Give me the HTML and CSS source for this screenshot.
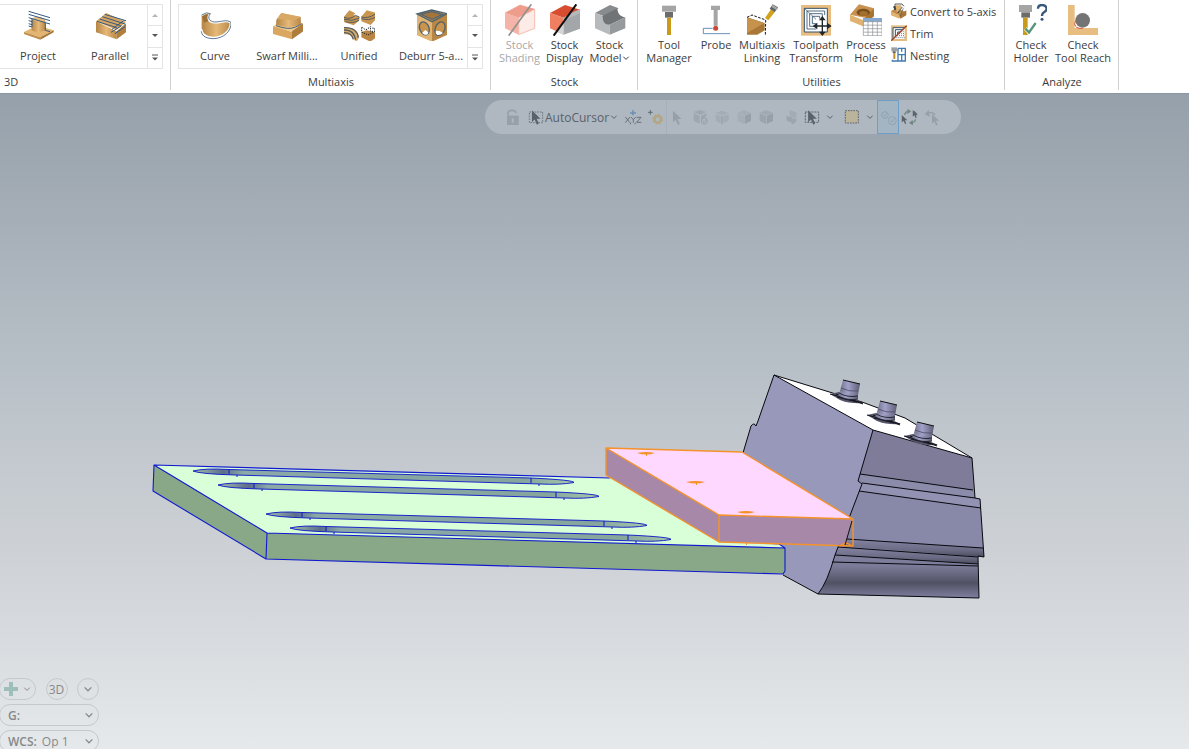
FILE: index.html
```html
<!DOCTYPE html>
<html lang="en">
<head>
<meta charset="utf-8">
<title>Toolpaths</title>
<link rel="stylesheet" href="styles.css">
</head>
<body>
<svg class="defs" width="0" height="0" aria-hidden="true">
  <defs>
    <linearGradient id="tan" x1="0" y1="0" x2="1" y2="1"><stop offset="0" stop-color="#b98747"/><stop offset="1" stop-color="#e9bf7d"/></linearGradient>
    <linearGradient id="tanV" x1="0" y1="0" x2="1" y2="0"><stop offset="0" stop-color="#b58544"/><stop offset=".5" stop-color="#e6b978"/><stop offset="1" stop-color="#b98848"/></linearGradient>
    <symbol id="chev" viewBox="0 0 8 8"><path d="M1.300 2.700 4 5.400 6.700 2.700" fill="none" stroke="currentColor" stroke-width="1"/></symbol>
    <symbol id="pointer" viewBox="0 0 26 42"><path d="M0 0V34L8 26 15 41 20 38 14 24H25Z" fill="currentColor"/></symbol>
  </defs>
</svg>

<header class="ribbon">
  <section class="group group-3d">
    <div class="gallery gallery-open">
      <button class="tile"><svg viewBox="66 27 96 96"><path d="M72 96 112 76 161 91 121 112Z" fill="#e3b573"/><path d="M72 96V102L121 119V112Z" fill="#c08d4b"/><path d="M121 112 161 91V97L121 119Z" fill="#a87636"/><path d="M95 57V91Q114 101 136 91V62Q116 68 95 57Z" fill="url(#tanV)"/><path d="M95 57Q103 48 121 51 137 57 136 64 112 69 95 57Z" fill="#e8bd7c"/><path d="M86 34 150 53M86 43 150 62M86 53 96 56V81L86 78M86 62 96 65M86 71 96 74M96 56 136 68V91L150 95M136 68 150 72" fill="none" stroke="#345a83" stroke-width="3"/></svg><span>Project</span></button>
      <button class="tile"><svg viewBox="282 27 96 96"><path d="M288 64 319 39 378 66 350 90Z" fill="#d9a661"/><path d="M288 64 350 94V118L288 97Z" fill="url(#tanV)"/><path d="M350 94 378 70V97L350 118Z" fill="#b17e3c"/><path d="M314 43 381 63M307 50 375 72M299 57 362 77M291 64 350 83M371 62 336 88M365 77 333 97M375 80 345 101" stroke="#345a83" stroke-width="3" fill="none"/></svg><span>Parallel</span></button>
      <div class="spin"><button aria-label="Scroll up" disabled><svg viewBox="0 0 8 8"><path d="M1 6 4 3 7 6Z" fill="#b4b4b4"/></svg></button><button aria-label="Scroll down"><svg viewBox="0 0 8 8"><path d="M1 2 4 5 7 2Z" fill="#555"/></svg></button><button aria-label="More"><svg viewBox="0 0 8 8"><path d="M1 1h6" stroke="#555"/><path d="M1 3.500 4 6.500 7 3.500Z" fill="#555"/></svg></button></div>
    </div>
    <h2>3D</h2>
  </section>

  <section class="group group-multi">
    <div class="gallery">
      <button class="tile"><svg viewBox="594 27 96 96"><path d="M602 45Q620 33 627 42C617 53 620 67 640 69 660 70 674 60 689 68 694 84 674 110 637 112 612 110 602 101 602 88Z" fill="url(#tanV)"/><path d="M603 46 609 68 623 63 620 42Z" fill="#9c6f35"/><path d="M603 46Q617 35 627 41C617 53 622 67 640 68 662 69 675 58 688 68 690 91 667 112 636 113 609 111 602 101 602 88" fill="none" stroke="#fff" stroke-width="5"/><path d="M602 45Q618 34 628 41C618 54 625 64 640 66 661 66 676 57 690 67 692 92 669 116 636 116 609 115 602 104 601 94" fill="none" stroke="#3d5f80" stroke-width="2.500"/></svg><span>Curve</span></button>
      <button class="tile"><svg viewBox="90 27 96 96"><path d="M96 78 110 72 187 70 153 96Z" fill="#edc98e"/><path d="M96 78 153 96V118L96 102Z" fill="#d9a75f"/><path d="M153 94 187 69V94L153 118Z" fill="#ae7d3e"/><path d="M106 60 121 39 179 51 180 70Q164 84 131 80L105 75Z" fill="url(#tanV)"/><path d="M121 39 180 51 160 61 108 57Z" fill="#d8a864"/><path d="M105 77Q143 91 164 81L182 71" fill="none" stroke="#496079" stroke-width="3"/></svg><span>Swarf Milli...</span></button>
      <button class="tile"><svg viewBox="306 27 96 96"><path d="M309 50 325 31 343 40 337 46 356 51 355 61 338 76 309 66Z" fill="#c99650"/><path d="M309 52Q329 60 343 46L355 51M309 58Q333 65 354 55M313 65Q338 71 354 61" fill="none" stroke="#555c5e" stroke-width="3"/><path d="M361 50 377 31 404 38 403 60 389 75 361 64Z" fill="#c99650"/><path d="M361 51Q380 57 404 42M361 56Q384 63 404 51" fill="none" stroke="#555c5e" stroke-width="3"/><path d="M309 82Q347 79 354 112L347 126 336 115Q331 102 309 103Z" fill="#d8ab6b"/><path d="M309 83Q349 82 352 113M309 90Q338 88 344 119M309 98Q331 97 337 118" fill="none" stroke="#555c5e" stroke-width="4"/><path d="M361 96 378 91 404 98V113L388 125 361 112Z" fill="#bb8643"/><path d="M362 82V96L381 105 403 94M364 82 374 90 389 80 388 94H401V85L393 84" fill="none" stroke="#20272a" stroke-width="3" stroke-dasharray="4 3"/></svg><span>Unified</span></button>
      <button class="tile"><svg viewBox="522 27 96 96"><path d="M528 42 572 30 618 41 573 65Z" fill="#c99651"/><path d="M528 42 573 63V125L528 106Z" fill="#e0b474"/><path d="M573 63 618 42V105L573 125Z" fill="#b98644"/><path d="M545 44 573 35 602 43 573 57Z" fill="#a77437" stroke="#e9c68d"/><path d="M528 42 572 30 618 41 573 65ZM541 43 573 35 604 43 573 58Z" fill="none" stroke="#50626d" stroke-width="4"/><ellipse cx="550" cy="85" rx="14" ry="20" transform="rotate(-22 550 85)" fill="#c8944e" stroke="#53636a" stroke-width="4"/><ellipse cx="597" cy="86" rx="14" ry="21" transform="rotate(22 597 86)" fill="#c8944e" stroke="#53636a" stroke-width="4"/><path d="M543 99 553 90 562 97 559 104 551 104ZM585 92 596 93 606 99Q600 106 589 105L584 100Z" fill="#fff"/></svg><span>Deburr 5-a...</span></button>
      <div class="spin"><button aria-label="Scroll up" disabled><svg viewBox="0 0 8 8"><path d="M1 6 4 3 7 6Z" fill="#b4b4b4"/></svg></button><button aria-label="Scroll down"><svg viewBox="0 0 8 8"><path d="M1 2 4 5 7 2Z" fill="#555"/></svg></button><button aria-label="More"><svg viewBox="0 0 8 8"><path d="M1 1h6" stroke="#555"/><path d="M1 3.500 4 6.500 7 3.500Z" fill="#555"/></svg></button></div>
    </div>
    <h2>Multiaxis</h2>
  </section>

  <section class="group group-stock">
    <div class="tools">
      <button class="tool w-45" disabled><svg viewBox="42 12 96 96"><path d="M45 39 90 15 134 27 85 53Z" fill="#ee9c8b"/><path d="M45 39 86 52V104L45 85Z" fill="#f4b5a8"/><path d="M86 53 134 29V86L86 104Z" fill="#fdebe7"/><path d="M45 39 90 15 134 28V85L86 104V53L134 28M69 77 86 83" fill="none" stroke="#f0a494" stroke-width="2"/><path d="M124 13 56 107" stroke="#8f8f8f" stroke-width="5"/></svg><span>Stock<br>Shading</span></button>
      <button class="tool w-45"><svg viewBox="177 12 96 96"><path d="M180 39 225 15 270 29 221 53Z" fill="#d84d30"/><path d="M180 39 221 53V104L180 85Z" fill="#f07e61"/><path d="M221 52 270 29V86L221 104Z" fill="#a3a7a9"/><path d="M221 68V104L199 95Z" fill="#d3d5d6"/><path d="M240 40 270 28V40L221 62Z" fill="#b5b8b9"/><path d="M259 13 191 107" stroke="#111" stroke-width="6"/></svg><span>Stock<br>Display</span></button>
      <button class="tool w-45"><svg viewBox="309 12 96 96"><path d="M312 39 357 15 383 25 336 47Z" fill="#898c8e"/><path d="M312 39 334 47C334 64 342 73 356 73L356 104 312 85Z" fill="#b7babc"/><path d="M334 47 379 25C380 41 387 50 403 52L356 74C341 74 334 64 334 47Z" fill="#707477"/><path d="M356 74 403 52V85L356 104Z" fill="#969a9d"/></svg><span>Stock<br>Model<svg class="chev"><use href="#chev"/></svg></span></button>
    </div>
    <h2>Stock</h2>
  </section>

  <section class="group group-util">
    <div class="tools">
      <button class="tool w-50"><svg viewBox="489 12 96 96"><path d="M516 17H558V35H516Z" fill="#a5a5a5"/><path d="M525 36H549V53H525Z" fill="#6c6c6c"/><path d="M531 53H543V105H531Z" fill="#c99b18"/></svg><span>Tool<br>Manager</span></button>
      <button class="tool w-44"><svg viewBox="30 12 96 96"><path d="M63 17H90V30H83V77H71V30H63Z" fill="#a5a5a5"/><path d="M40 101V85H68M40 101H120" fill="none" stroke="#4b79a9" stroke-width="2.500"/><circle cx="77" cy="85" r="7.500" fill="#cc4a35"/></svg><span>Probe</span></button>
      <button class="tool w-48"><svg viewBox="168 12 96 96"><path d="M171 52 224 69V91L202 104H171Z" fill="#a97838"/><path d="M171 52 222 70 171 99Z" fill="#c7924c"/><path d="M171 52 186 45 227 60 226 106" fill="none" stroke="#171717" stroke-width="3" stroke-dasharray="8 4"/><path d="M225 54 243 28 254 37 235 61Z" fill="#d3a21c"/><path d="M239 26 248 13 264 22 254 37Z" fill="#606466"/><path d="M246 17 262 28" stroke="#a6a9ab" stroke-width="7"/></svg><span>Multiaxis<br>Linking</span></button>
      <button class="tool w-60"><svg viewBox="330 12 96 96"><path d="M333 15H423V107H333Z" fill="#e7bd82"/><path d="M343 25H412V96H343Z" fill="#fff" stroke="#31516e" stroke-width="3"/><path d="M343 25 378 58" stroke="#31516e" stroke-width="2"/><path d="M404 45V33H351V87H379M397 53V41H359V79H379M389 56V49H367V71H379" fill="none" stroke="#31516e" stroke-width="2.500"/><path d="M397 55V102M373 78H421" stroke="#20272b" stroke-width="4"/><path d="M397 48 387 61H407ZM397 108 387 95H407ZM368 78 382 68V88ZM425 78 411 68V88Z" fill="#20272b"/></svg><span>Toolpath<br>Transform</span></button>
      <button class="tool w-40"><svg viewBox="480 12 96 96"><path d="M480 44 507 13 552 25 531 55Z" fill="#c89150"/><path d="M480 44 519 60V79L480 63Z" fill="#e0b372"/><path d="M519 60 552 25V49L519 79Z" fill="#a97431"/><ellipse cx="520" cy="37" rx="20" ry="11" fill="#78501e"/><path d="M508 37Q521 29 534 38L532 47H511Z" fill="#a56f2d"/><path d="M520 55H576V107H520Z" fill="#fff"/><path d="M519 54H577V65H519Z" fill="#85a9d1"/><path d="M520 65H576V107H520ZM520 75.500H576M520 86H576M520 96.500H576M534 65V107M548 65V107M562 65V107" fill="none" stroke="#898c8e" stroke-width="2"/></svg><span>Process<br>Hole</span></button>
      <div class="small-tools">
        <button><svg viewBox="93 12 48 48"><path d="M93 36 110 27 139 40 124 58 95 48Z" fill="#c18b46"/><path d="M93 37 118 48V59L93 49Z" fill="#dfb270"/><path d="M118 48 139 34V49L121 59Z" fill="#a87536"/><path d="M105 29V15H126L132 22" fill="none" stroke="#555b5d" stroke-width="3"/><path d="M101 23 105 33 110 22ZM114 42 126 25" fill="#394349" stroke="#394349" stroke-width="3"/><path d="M106 19H124L126 29 111 41Z" fill="#ddb16f"/><path d="M111 43 126 25M121 50 130 28" stroke="#475057" stroke-width="2"/></svg>Convert to 5-axis</button>
        <button><svg viewBox="93 78 48 48"><path d="M93 79H141V126H93Z" fill="#e4bb81"/><path d="M99 85H134V120H99Z" fill="#fff"/><path d="M99 119V86H135M106 113V92H128M113 105V99H121" fill="none" stroke="#31516e" stroke-width="3"/><path d="M107 116H134M111 110H134M117 104H134M122 98H134M128 92H134" stroke="#677a8b" stroke-width="3" stroke-dasharray="3 3"/><path d="M94 125 140 80" stroke="#9b3e29" stroke-width="4"/></svg>Trim</button>
        <button><svg viewBox="93 144 48 48"><path d="M94 145H111V157H94Z" fill="#9ba0a2"/><path d="M98 157H107V162H98Z" fill="#595e60"/><path d="M100 162H106V180H100Z" fill="#bd912b"/><path d="M114 148H136V186H97V182M114 148V186M114 167H136M125 167V186M125 148V158" fill="none" stroke="#417aaf" stroke-width="4"/></svg>Nesting</button>
      </div>
    </div>
    <h2>Utilities</h2>
  </section>

  <section class="group group-analyze">
    <div class="tools">
      <button class="tool w-40"><svg viewBox="465 12 96 96"><path d="M477 15H516V36H477Z" fill="#a5a5a5"/><path d="M484 37H510V53H484Z" fill="#6c6c6c"/><path d="M489 53H503V105H489Z" fill="#c99b18"/><path d="M496 86 507 97 527 69" fill="none" stroke="#fff" stroke-width="11"/><path d="M496 86 507 97 527 69" fill="none" stroke="#559478" stroke-width="7"/><path d="M534 26Q534 15 546 15C561 15 564 30 553 36 546 40 546 42 546 48" fill="none" stroke="#37597c" stroke-width="7"/><circle cx="546" cy="58" r="4.500" fill="#37597c"/></svg><span>Check<br>Holder</span></button>
      <button class="tool w-64"><svg viewBox="621 12 96 96"><path d="M624 15H644V84H714V105H624Z" fill="#e7bd82"/><circle cx="668" cy="61" r="22" fill="#747474"/><path d="M648 61C639 74 646 87 668 85" fill="none" stroke="#d75035" stroke-width="3"/></svg><span>Check<br>Tool Reach</span></button>
    </div>
    <h2>Analyze</h2>
  </section>
</header>

<main class="view">
  <svg class="scene" viewBox="0 94 1189 655" role="img" aria-label="Vise holding a slotted plate and a block">
    <defs>
      <linearGradient id="roll" x1="0" y1="0" x2="0" y2="1"><stop offset="0" stop-color="#8585a5"/><stop offset=".65" stop-color="#696982"/><stop offset="1" stop-color="#4c4c5e"/></linearGradient>
      <linearGradient id="jaw" x1="0" y1="0" x2="0" y2="1"><stop offset="0" stop-color="#7f7f9d"/><stop offset=".25" stop-color="#7c7c9a"/><stop offset=".65" stop-color="#515164"/><stop offset="1" stop-color="#8080a0"/></linearGradient>
      <linearGradient id="pin"><stop offset="0" stop-color="#70708a"/><stop offset=".4" stop-color="#a2a2ca"/><stop offset="1" stop-color="#5e5e76"/></linearGradient>
      <linearGradient id="slotFill"><stop offset="0" stop-color="#a4c4a8"/><stop offset=".08" stop-color="#5b6c8c"/><stop offset=".13" stop-color="#8aa9a8"/><stop offset=".87" stop-color="#85a59d"/><stop offset="1" stop-color="#a5c9aa"/></linearGradient>
      <g id="slot"><path d="M193 471Q205 468 229 469.500L531 478Q574 480 574 482.500 560 485 540 484L235 475Q200 474 193 471Z" fill="url(#slotFill)" stroke="#0a12c8" stroke-width=".9"/><path d="M229 470V474M531 478V483M237 475V477M539 484V486" stroke="#0a12c8"/></g>
      <g id="bolt"><path d="M830 394 839 392 864 403Q850 404 840 400Z" fill="#55556a"/><path d="M830 394 863 403M836 394 863 404M837 397 857 402" stroke="#14141c" fill="none"/><path d="M840 391 858 395 858 399Q848 401 838 396Z" fill="url(#pin)"/><path d="M839 393Q848 398 858 396M838 396Q848 401 858 399" fill="none" stroke="#20202a" stroke-width=".9"/><path d="M843 380 860 384 858 395Q848 395 840 391Z" fill="url(#pin)"/><path d="M843 380 860 384" stroke="#111"/><path d="M841 388Q849 392 858 391" fill="none" stroke="#44445a" stroke-width=".7"/></g>
    </defs>
    <g stroke-linejoin="round">
      <path d="M873 430 972 458 975 498 980 499 984 557 978 556 979 598 818 594 835 547Z" fill="#8888a8"/>
      <path d="M873 430 972 458 973 490 860 474Z" fill="#7e7c99"/>
      <path d="M860 474 973 490 975 498 862 483Z" fill="#8b8baa"/>
      <path d="M862 483 980 499 981 508 859 491Z" fill="#9292b3"/>
      <path d="M847 539 983 548 984 557 838 546Z" fill="url(#roll)"/>
      <path d="M838 547 978 557V564L835 555Z" fill="url(#roll)"/>
      <path d="M835 555 978 565 979 598 818 594Z" fill="url(#jaw)"/>
      <path d="M774 375 873 430 858 481 862 484 835 555Q827 583 818 594L783 575 743 453 751 426Q754 422 756 426L758 421Z" fill="#9898bb"/>
      <path d="M774 375 862 402 905 418 972 458 873 430Z" fill="#fff"/>
      <path d="M743 453 751 426Q754 422 756 426L758 421 774 375 873 430 858 481 862 484 835 555Q827 583 818 594L783 575M774 375 862 402 905 418 972 458 873 430M972 458 975 498 980 499 984 557 978 556 979 598 818 594M860 474 973 490M862 483 975 498M859 491 981 508M847 539 983 548M838 547 978 557M835 555 978 564M832 562 978 566" fill="none" stroke="#08080e" stroke-width="1"/>
      <use href="#bolt"/><use href="#bolt" x="37" y="21"/><use href="#bolt" x="74" y="42"/>
      <path d="M154 465 610 478 719 542 781 545 785 548 267 533Z" fill="#d8ffd8"/>
      <path d="M154 465 267 533 266 559 153 491Z" fill="#88a888"/>
      <path d="M267 533 785 548V574L266 559Z" fill="#88a888"/>
      <path d="M610 478 154 465 153 491 266 559 783 574 785 571V548L267 533 154 465M267 533 266 559M779 544 785 548" fill="none" stroke="#1018d0" stroke-width="1.100"/>
      <use href="#slot"/><use href="#slot" x="25" y="14"/><use href="#slot" x="73" y="43"/><use href="#slot" x="97" y="57"/>
      <path d="M606 448 742 452 853 519 719 515Z" fill="#ffd8ff"/>
      <path d="M606 448 719 515V542L606 475Z" fill="#a888a8"/>
      <path d="M719 515 852 519 845 545 719 542Z" fill="#a888a8"/>
      <path d="M606 448 742 452 853 519V546L719 542 606 475V448L719 515 853 519M719 515V542M841 545 847 543 852 546" fill="none" stroke="#f5922a" stroke-width="1.400"/>
      <path d="M852 521 845 545" stroke="#111"/>
      <g fill="#f5922a"><path d="M637 453Q646 451 655 453 646 456 637 453ZM686 482Q696 480 705 482 696 485 686 482ZM737 512Q746 510 755 512 746 515 737 512Z"/><path d="M646 454h1v2h-1ZM696 483h1v2h-1ZM746 543h1v2h-1Z"/></g>
    </g>
  </svg>

  <div class="selectbar" role="toolbar" aria-label="Selection">
    <button class="dim" aria-label="Lock"><svg viewBox="63 33 66 66"><path d="M84 62V54Q84 46 96 46 107 46 108 54" fill="none" stroke="currentColor" stroke-width="5"/><path d="M81 62H116V90H81Z" fill="currentColor"/><path d="M98 70V83" stroke="#afb7c0" stroke-width="6"/></svg></button>
    <button class="auto"><svg viewBox="135 33 66 66"><path d="M148 51H188V83H148Z" fill="none" stroke="#646b74" stroke-width="2.500" stroke-dasharray="5 3"/><use href="#pointer" x="155" y="46" width="28" height="44"/></svg><span>AutoCursor</span><svg class="chev"><use href="#chev"/></svg></button>
    <button aria-label="XYZ"><svg viewBox="426 33 66 66"><path d="M459 46V61M450 54H468" stroke="#6e91b5" stroke-width="5"/><path d="M436 66 450 83M450 66 436 83M453 66 460 74 467 66M460 74V83M470 67H483L470 82H484M453 83 450 88M467 83 464 88" fill="none" stroke="#59616b" stroke-width="2.500"/></svg></button>
    <button aria-label="Point options"><svg viewBox="492 33 66 66"><path d="M511 45V59M504 52H518" stroke="#626a73" stroke-width="3"/><circle cx="533" cy="73" r="10" fill="none" stroke="#b3a681" stroke-width="7"/><circle cx="533" cy="73" r="14" fill="none" stroke="#b3a681" stroke-width="4" stroke-dasharray="5.500 5.500"/></svg></button>
    <i class="rule"></i>
    <button class="dim" aria-label="Pointer"><svg viewBox="561 33 66 66"><use href="#pointer" x="578" y="47" width="28" height="44"/></svg></button>
    <button class="dim" aria-label="Solid select"><svg viewBox="627 33 66 66"><path d="M641 51 660 45 678 51 660 59ZM641 55 659 63V86L641 77ZM663 62 679 55V64L663 75Z" fill="currentColor" opacity=".7"/><circle cx="673" cy="78" r="9" fill="none" stroke="currentColor" stroke-width="3"/><path d="M668 77 673 82 680 72" fill="none" stroke="currentColor" stroke-width="3"/></svg></button>
    <button class="dim" aria-label="Edge select"><svg viewBox="693 33 66 66"><path d="M707 54 726 47 746 54 727 60ZM707 58 722 64V85L707 77ZM730 63 746 58V77L730 85Z" fill="currentColor" opacity=".5"/><path d="M726 62V88" stroke="currentColor" stroke-width="4"/></svg></button>
    <button class="dim" aria-label="Face select"><svg viewBox="39 33 66 66"><path d="M53 53 73 46 93 53 74 60Z" fill="currentColor" opacity=".4"/><path d="M53 55 72 62V87L53 78Z" fill="currentColor" opacity=".4"/><path d="M74 62 93 55V78L74 87Z" fill="currentColor"/></svg></button>
    <button class="dim" aria-label="Body select"><svg viewBox="105 33 66 66"><path d="M119 53 139 46 159 53 140 60Z" fill="currentColor" opacity=".6"/><path d="M119 55 138 62V87L119 78Z" fill="currentColor" opacity=".8"/><path d="M140 62 159 55V78L140 87Z" fill="currentColor"/></svg></button>
    <button class="dim wide" aria-label="Last select"><svg viewBox="171 33 66 66"><path d="M205 45 226 52V70L207 64Z" fill="currentColor" opacity=".5"/><path d="M196 62 215 68V84L197 77ZM217 69 227 74Q226 84 211 88" fill="currentColor" opacity=".8"/></svg></button>
    <button aria-label="Window select"><svg viewBox="243 33 66 66"><path d="M256 51H296V82H256Z" fill="none" stroke="#5c636c" stroke-width="3" stroke-dasharray="6 3"/><use href="#pointer" x="264" y="46" width="28" height="44"/></svg></button>
    <button class="drop" aria-label="Window select options"><svg class="chev"><use href="#chev"/></svg></button>
    <i class="space"></i>
    <button aria-label="Area"><svg viewBox="360 33 66 66"><path d="M373 47H412V84H373Z" fill="#bcb39b" stroke="#5c636c" stroke-width="3" stroke-dasharray="5 3"/></svg></button>
    <button class="drop" aria-label="Area options"><svg class="chev"><use href="#chev"/></svg></button>
    <button class="picked" aria-label="Verify selection"><svg viewBox="471 33 66 66"><circle cx="492" cy="60" r="10" fill="none" stroke="#92a4b3" stroke-width="3"/><circle cx="514" cy="77" r="12" fill="none" stroke="#92a4b3" stroke-width="3"/><path d="M488 60 491 64 497 55M508 76 513 81 520 71" fill="none" stroke="#92a4b3" stroke-width="3"/></svg></button>
    <button aria-label="Invert selection"><svg viewBox="537 33 66 66"><path d="M554 60Q555 49 568 49M581 49Q589 52 590 61M587 73Q584 83 573 83" fill="none" stroke="#718783" stroke-width="4"/><path d="M562 42 574 49 562 57ZM578 75 567 84 579 91Z" fill="#718783"/><use href="#pointer" x="543" y="60" width="22" height="28"/><use href="#pointer" x="576" y="45" width="20" height="25"/></svg></button>
    <button class="dim" aria-label="Undo selection"><svg viewBox="603 33 66 66"><path d="M618 57Q635 47 645 59" fill="none" stroke="currentColor" stroke-width="5"/><path d="M626 45 614 57 629 66Z" fill="currentColor"/><use href="#pointer" x="634" y="57" width="26" height="36"/></svg></button>
  </div>

  <div class="planes">
    <div class="plane-row">
      <button class="add" aria-label="Add"><svg class="plus" viewBox="0 0 14 14"><path d="M5 0h4v5h5v4H9v5H5V9H0V5h5Z" fill="#9ebfb9"/></svg><svg class="chev"><use href="#chev"/></svg></button>
      <button class="round">3D</button>
      <button class="round" aria-label="More"><svg class="chev chev-lg"><use href="#chev"/></svg></button>
    </div>
    <div class="plane"><label for="g">G:</label><select id="g"><option></option></select><svg class="chev chev-lg"><use href="#chev"/></svg></div>
    <div class="plane"><label for="wcs">WCS:</label><select id="wcs"><option>Op 1</option></select><svg class="chev chev-lg"><use href="#chev"/></svg></div>
  </div>
</main>
</body>
</html>
```
FILE: styles.css
```css
* { box-sizing: border-box; }
body {
  margin: 0;
  height: 100vh;
  display: flex;
  flex-direction: column;
  overflow: hidden;
  background: #fff;
  color: #3c3c3c;
  font: 11px/13px "Open Sans", "Noto Sans", sans-serif;
}
button, select {
  margin: 0;
  padding: 0;
  border: 0;
  background: none;
  color: inherit;
  font: inherit;
}
svg { display: block; flex: none; }
.defs { position: absolute; }
.chev { width: 8px; height: 8px; }
.chev-lg { width: 10px; height: 10px; }

/* Ribbon */
.ribbon {
  display: flex;
  flex: none;
  border-bottom: 1px solid #8c96a0;
  background: #fff;
}
.group {
  position: relative;
  display: flex;
  flex-direction: column;
  height: 93px;
  padding: 4px 7px 0;
}
.group::after {
  content: "";
  position: absolute;
  right: 0;
  top: 0;
  height: 90px;
  border-right: 1px solid #d0d0d0;
}
.group h2 {
  margin: auto 0 4px;
  font-size: 11px;
  font-weight: 400;
  line-height: 15px;
  text-align: center;
}
.group-3d { width: 171px; padding-left: 0; }
.group-3d h2 { padding-left: 4px; text-align: left; }
.group-multi { width: 320px; }
.group-stock { width: 147px; padding: 4px 6px 0; }
.group-util { width: 367px; padding: 4px 6px 0; }
.group-analyze { width: 114px; padding: 4px 0 0 6px; }
.group-analyze h2 { padding-right: 6px; }
.gallery {
  display: flex;
  width: 305px;
  height: 65px;
  border: 1px solid #e4e4e4;
}
.gallery-open { width: 163px; padding-left: 2px; border-left: 0; }
.tile {
  display: flex;
  flex-direction: column;
  align-items: center;
  justify-content: flex-start;
  width: 72px;
  padding-top: 4px;
  white-space: nowrap;
}
.tile svg, .tool > svg { width: 32px; height: 32px; }
.tile span { margin-top: 7px; line-height: 15px; }
.spin {
  display: flex;
  flex-direction: column;
  width: 15px;
  margin-left: auto;
  border-left: 1px solid #e4e4e4;
}
.spin button { display: grid; place-items: center; flex: 1; }
.spin button + button { border-top: 1px solid #e4e4e4; }
.spin svg { width: 8px; height: 8px; }

.tools { display: flex; height: 65px; }
.tool {
  display: flex;
  flex-direction: column;
  align-items: center;
  flex: none;
  white-space: nowrap;
}
.tool span { margin-top: 2px; }
.tool .chev { display: inline-block; }
.tool:disabled { color: #a8a8a8; }
.w-40 { width: 40px; }
.w-44 { width: 44px; }
.w-45 { width: 45px; }
.w-48 { width: 48px; }
.w-50 { width: 50px; }
.w-60 { width: 60px; }
.w-64 { width: 64px; }
.small-tools {
  display: flex;
  flex-direction: column;
  margin: -4px 0 0 5px;
}
.small-tools button {
  display: flex;
  align-items: center;
  gap: 3px;
  height: 22px;
  white-space: nowrap;
}
.small-tools svg { width: 16px; height: 16px; }

/* Graphics view */
.view {
  position: relative;
  flex: 1;
  min-height: 0;
  overflow: hidden;
  background: linear-gradient(#96a0aa, #b8c0c7 42%, #d3d6da 77%, #e6e9eb);
}
.scene { width: 100%; height: 100%; }

.selectbar {
  position: absolute;
  left: 485px;
  top: 6px;
  display: flex;
  align-items: center;
  height: 34px;
  padding: 0 18px 0 16px;
  border-radius: 17px;
  background: #afb7c0;
  color: #59616b;
}
.selectbar button { width: 22px; height: 34px; display: grid; place-items: center; flex: none; }
.selectbar button > svg:not(.chev) { width: 22px; height: 22px; }
.selectbar .auto {
  display: flex;
  align-items: center;
  width: 99px;
  padding: 0 4px 0 2px;
  font-size: 12px;
}
.auto span { margin: 0 auto 0 -2px; }
.selectbar .wide { width: 24px; }
.selectbar .drop { width: 14px; }
.selectbar .dim { color: #979fa9; }
.selectbar .picked { border: 1px solid #6f9fc8; background: #a3b4c3; }
.rule { width: 1px; height: 34px; background: #a7afb8; }
.space { width: 4px; }

.planes {
  position: absolute;
  left: -1px;
  bottom: -3px;
  display: flex;
  flex-direction: column;
  gap: 4px;
  width: 100px;
  color: #85898c;
}
.plane-row { display: flex; justify-content: space-between; }
.add, .round, .plane {
  display: flex;
  align-items: center;
  height: 22px;
  border: 1px solid #c6c9cc;
  border-radius: 11px;
}
.add { width: 37px; padding: 0 4px; justify-content: space-between; }
.plus { width: 14px; height: 14px; }
.round { width: 22px; justify-content: center; font-size: 12px; }
.plane { position: relative; padding: 0 4px 0 8px; gap: 5px; font-size: 12px; }
.plane label { font-size: 12px; font-weight: 600; }
.plane select { flex: 1; min-width: 0; appearance: none; }
.plane .chev { position: absolute; right: 4px; pointer-events: none; }
```
